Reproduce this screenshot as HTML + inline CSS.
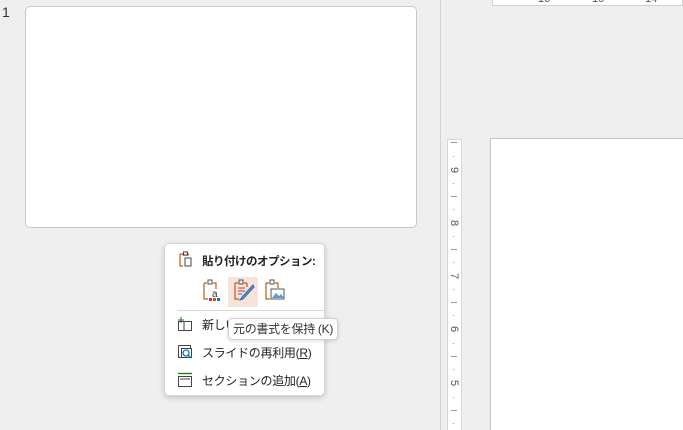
<!DOCTYPE html>
<html><head><meta charset="utf-8"><style>
*{margin:0;padding:0;box-sizing:border-box}
body{width:683px;height:430px;overflow:hidden;background:#efefef;position:relative;font-family:"Liberation Sans","Noto Sans CJK JP",sans-serif}
.abs{position:absolute;white-space:nowrap}
.num{position:absolute;font-size:11px;color:#555;transform:rotate(90deg);width:10px;text-align:center;line-height:10px}
.tick{position:absolute;background:#999;height:1px}
.menu{left:164px;top:243px;width:161px;height:153px;background:#fff;border:1px solid #d6d6d6;border-radius:5px;box-shadow:0 2px 6px rgba(0,0,0,.18)}
.item{position:absolute;left:37px;font-size:12px;color:#222;white-space:nowrap;letter-spacing:-0.3px}
</style></head><body>
<div class="abs" style="left:2px;top:4px;font-size:14px;color:#333">1</div>
<div class="abs" style="left:25px;top:6px;width:392px;height:222px;background:#fff;border:1px solid #c8c8c8;border-radius:5px"></div>
<div class="abs" style="left:440px;top:0;width:1px;height:430px;background:#d2d2d2"></div>
<div class="abs" style="left:492px;top:0;width:191px;height:6px;background:#fff;border:1px solid #d0d0d0;border-top:none;overflow:hidden">
<span class="abs" style="left:45px;top:-7px;font-size:11px;color:#555">16</span>
<span class="abs" style="left:99px;top:-7px;font-size:11px;color:#555">15</span>
<span class="abs" style="left:152px;top:-7px;font-size:11px;color:#555">14</span>
</div>
<div class="abs" style="left:447px;top:139px;width:15px;height:291px;background:#fff;border:1px solid #d6d6d6;border-bottom:none">
<div class="tick" style="left:3px;top:2px;width:6px"></div>
<div class="num" style="left:1px;top:25px">9</div>
<div class="tick" style="left:5px;top:16px;width:1px"></div>
<div class="tick" style="left:5px;top:43px;width:1px"></div>
<div class="tick" style="left:3px;top:56px;width:6px"></div>
<div class="tick" style="left:5px;top:69px;width:1px"></div>
<div class="num" style="left:1px;top:78px">8</div>
<div class="tick" style="left:5px;top:96px;width:1px"></div>
<div class="tick" style="left:3px;top:109px;width:6px"></div>
<div class="tick" style="left:5px;top:122px;width:1px"></div>
<div class="num" style="left:1px;top:131px">7</div>
<div class="tick" style="left:5px;top:149px;width:1px"></div>
<div class="tick" style="left:3px;top:162px;width:6px"></div>
<div class="tick" style="left:5px;top:175px;width:1px"></div>
<div class="num" style="left:1px;top:184px">6</div>
<div class="tick" style="left:5px;top:203px;width:1px"></div>
<div class="tick" style="left:3px;top:216px;width:6px"></div>
<div class="tick" style="left:5px;top:229px;width:1px"></div>
<div class="num" style="left:1px;top:238px">5</div>
<div class="tick" style="left:5px;top:257px;width:1px"></div>
<div class="tick" style="left:3px;top:270px;width:6px"></div>
<div class="tick" style="left:5px;top:283px;width:1px"></div>
</div>
<div class="abs" style="left:490px;top:138px;width:193px;height:292px;background:#fff;border:1px solid #c6c6c6;border-right:none;border-bottom:none"></div>
<div class="abs menu">
<svg class="abs" style="left:13px;top:7px" width="16" height="17" viewBox="0 0 16 17"><path d="M2 3h3v1h5V3h1M2 3v12h3" fill="none" stroke="#c55a11" stroke-width="1.2"/><rect x="5.5" y="1" width="4" height="3" fill="none" stroke="#444"/><rect x="7" y="7" width="6" height="8" fill="none" stroke="#444"/></svg>
<div class="abs" style="left:37px;top:9px;font-size:11.5px;font-weight:bold;color:#222;letter-spacing:-0.5px">貼り付けのオプション:</div>
<svg class="abs" style="left:37px;top:35px" width="20" height="22" viewBox="0 0 20 22"><path d="M2 4h3M11 4h3v6M2 4v16h4" fill="none" stroke="#c55a11" stroke-width="1.2"/><rect x="6" y="1" width="4" height="4" fill="none" stroke="#555"/><text x="10" y="18" font-size="10" fill="#333" font-family="Liberation Sans">a</text><rect x="7" y="19" width="3" height="3" fill="#d13438"/><rect x="11" y="19" width="3" height="3" fill="#c55a11"/><rect x="15" y="19" width="3" height="3" fill="#0078d4"/></svg>
<div class="abs" style="left:63px;top:33px;width:30px;height:30px;background:#f8e2dc"></div>
<svg class="abs" style="left:68px;top:35px" width="22" height="24" viewBox="0 0 22 24"><path d="M2 4h3M11 4h3M2 4v16h4M14 4v4" fill="none" stroke="#c55a11" stroke-width="1.2"/><rect x="6" y="1" width="4" height="4" fill="none" stroke="#555"/><path d="M5 9h7M5 12h7" stroke="#d13438"/><path d="M5 15h4" stroke="#0078d4"/><path d="M20 6L9 18l-2 3 3-1 11-12z" fill="#5b9bd5" stroke="#2e6aa8"/></svg>
<svg class="abs" style="left:99px;top:35px" width="22" height="22" viewBox="0 0 22 22"><path d="M2 4h3M11 4h3v5M2 4v16h4" fill="none" stroke="#c55a11" stroke-width="1.2"/><rect x="6" y="1" width="4" height="4" fill="none" stroke="#555"/><rect x="7" y="10" width="13" height="10" fill="#fff" stroke="#555"/><path d="M8 19l4-5 3 3 2-2 3 4z" fill="#5b9bd5"/></svg>
<div class="abs" style="left:12px;top:66px;width:148px;height:1px;background:#d6d6d6"></div>
<svg class="abs" style="left:12px;top:72px" width="16" height="16" viewBox="0 0 16 16"><path d="M4 1v6M1 4h6" stroke="#107c10"/><rect x="1.5" y="5.5" width="13" height="9" fill="none" stroke="#444"/><path d="M7 5.5v9" stroke="#444"/></svg>
<div class="item" style="top:72px">新しい</div>
<svg class="abs" style="left:12px;top:100px" width="16" height="16" viewBox="0 0 16 16"><path d="M1.5 1.5v12h3M1.5 1.5h12v3" fill="none" stroke="#444"/><rect x="4.5" y="4.5" width="10" height="9" fill="none" stroke="#444"/><circle cx="9" cy="9" r="3" fill="none" stroke="#0078d4" stroke-width="1.3"/><path d="M11 11l3 3" stroke="#0078d4" stroke-width="1.5"/></svg>
<div class="item" style="top:100px">スライドの再利用(<u>R</u>)</div>
<svg class="abs" style="left:12px;top:128px" width="16" height="16" viewBox="0 0 16 16"><path d="M1 1.5h14" stroke="#107c10" stroke-width="1.3"/><rect x="1.5" y="4.5" width="13" height="10" fill="none" stroke="#444"/><path d="M3 7h10" stroke="#444"/></svg>
<div class="item" style="top:128px">セクションの追加(<u>A</u>)</div>
</div>
<div class="abs" style="left:228px;top:318px;width:110px;height:22px;background:#fff;border:1px solid #cfcfcf;border-radius:4px;box-shadow:0 1px 4px rgba(0,0,0,.15);font-size:12px;color:#333;line-height:20px;padding-left:4px;letter-spacing:-0.3px;overflow:hidden">元の書式を保持 (K)</div>
</body></html>
